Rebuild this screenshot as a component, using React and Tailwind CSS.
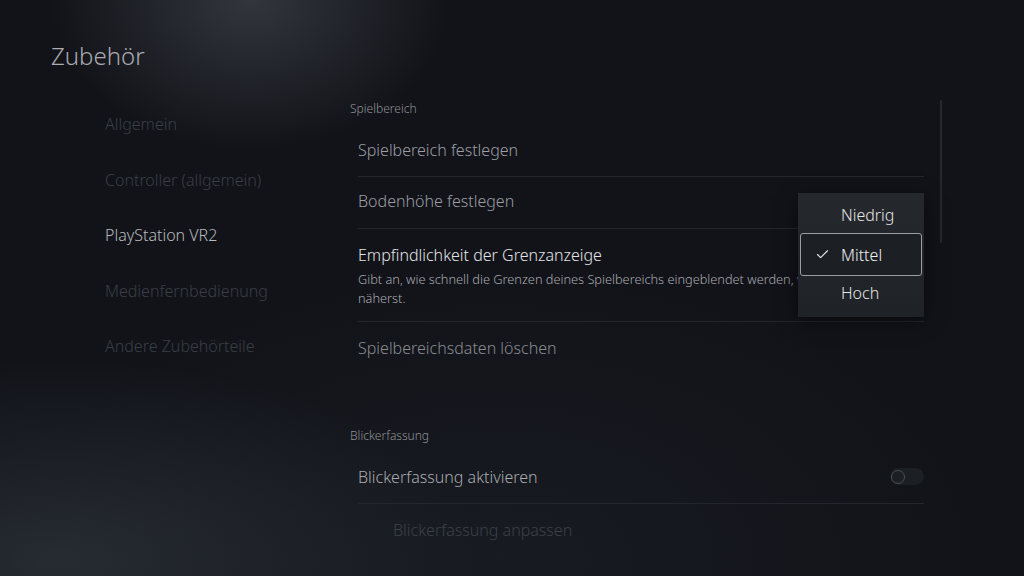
import { Check } from "lucide-react";

const MENU = [
  { label: "Allgemein", active: false },
  { label: "Controller (allgemein)", active: false },
  { label: "PlayStation VR2", active: true },
  { label: "Medienfernbedienung", active: false },
  { label: "Andere Zubehörteile", active: false },
];

function Row({ children, divider = true, className = "" }) {
  return (
    <div className={`ml-[8px] ${divider ? "border-b border-[#23262c]" : ""} ${className}`}>
      {children}
    </div>
  );
}

function Dropdown() {
  return (
    <div className="absolute left-[448px] top-[193px] w-[126px] bg-gradient-to-b from-[#25282d] to-[#1f2227] pb-[7px] pt-[4px] shadow-[0_4px_18px_rgba(0,0,0,0.5)]">
      <div className="flex h-[36px] items-center pl-[43px] text-[16px] text-[#e6e6e6]">Niedrig</div>
      <div className="mx-[2px] flex h-[43px] items-center rounded-[3px] border border-[#9a9ca6] bg-[#1c1f24] pl-[14px] text-[16px] text-[#f0f0f0]">
        <Check size={15} strokeWidth={1.75} className="mr-[11px] text-[#e8e8e8]" />
        Mittel
      </div>
      <div className="flex h-[34px] items-center pl-[43px] text-[16px] text-[#e6e6e6]">Hoch</div>
    </div>
  );
}

export default function App() {
  return (
    <div
      className="relative h-[576px] w-[1024px] overflow-hidden bg-[#111319] font-['Noto_Sans',sans-serif] font-light"
      style={{
        backgroundImage:
          "radial-gradient(ellipse 200px 150px at 250px 0px, rgba(74,76,84,0.6), rgba(0,0,0,0)), radial-gradient(ellipse 420px 200px at 60px 560px, rgba(52,58,66,0.6), rgba(0,0,0,0)), radial-gradient(ellipse 500px 300px at 500px 560px, rgba(30,34,40,0.5), rgba(0,0,0,0))",
      }}
    >
      <div className="flex">
        {/* left column */}
        <div className="w-[350px] shrink-0 pt-[40px]">
          <h1 className="pl-[51px] text-[24px] leading-[32px] text-[#a9abaf]">Zubehör</h1>
          <ul className="mt-[34px] pl-[105px]">
            {MENU.map((m) => (
              <li
                key={m.label}
                className={`h-[55.5px] text-[16px] leading-[36px] ${m.active ? "text-[#b7b9bd]" : "text-[#3b3e45]"}`}
              >
                {m.label}
              </li>
            ))}
          </ul>
        </div>

        {/* right column */}
        <div className="relative w-[574px] pt-[99px]">
          <div className="text-[12px] leading-[20px] text-[#8f9196]">Spielbereich</div>
          <Row className="flex h-[58px] items-center pt-[4px]">
            <span className="text-[16px] text-[#9c9ea3]">Spielbereich festlegen</span>
          </Row>
          <Row className="flex h-[52px] items-center pb-[3px]">
            <span className="text-[16px] text-[#9c9ea3]">Bodenhöhe festlegen</span>
          </Row>
          <Row className="pb-[13px] pt-[14px]">
            <div className="text-[16px] leading-[24px] text-[#e4e4e6]">Empfindlichkeit der Grenzanzeige</div>
            <div className="mt-[3px] text-[12.75px] leading-[19px] text-[#a8aaae]">
              Gibt an, wie schnell die Grenzen deines Spielbereichs eingeblendet werden, wenn du dich ihnen näherst.
            </div>
          </Row>
          <Row divider={false} className="flex h-[52px] items-center">
            <span className="text-[16px] text-[#8a8c91]">Spielbereichsdaten löschen</span>
          </Row>

          <div className="mt-[52px] text-[12px] leading-[20px] text-[#8f9196]">Blickerfassung</div>
          <Row className="flex h-[58px] items-center justify-between pt-[4px]">
            <span className="text-[16px] text-[#a9abaf]">Blickerfassung aktivieren</span>
            <span className="flex h-[17px] w-[34px] items-center rounded-full bg-[#1c1f24] pl-[1px]">
              <span className="h-[14px] w-[14px] rounded-full border border-[#4a4d54]" />
            </span>
          </Row>
          <div className="ml-[43px] flex h-[52px] items-center text-[16px] text-[#3d4047]">Blickerfassung anpassen</div>

          <Dropdown />
        </div>

        {/* scrollbar */}
        <div className="ml-[16px] mt-[100px] h-[143px] w-[2px] rounded-full bg-[#25282e]" />
      </div>
    </div>
  );
}
